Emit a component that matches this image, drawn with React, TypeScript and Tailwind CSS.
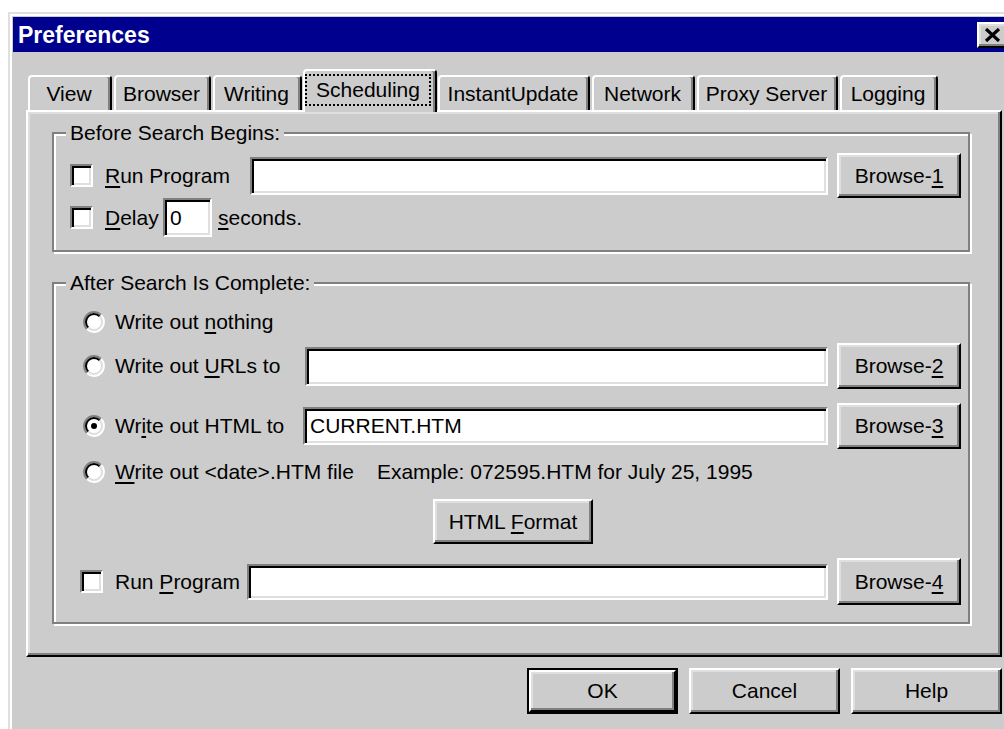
import React from 'react';

const raised =
  'border-2 border-t-white border-l-white border-r-black border-b-black bg-[#cccccc] shadow-[inset_-2px_-2px_0_#808080,inset_2px_2px_0_#dfdfdf]';
const sunken =
  'border-2 border-t-[#808080] border-l-[#808080] border-r-white border-b-white bg-white shadow-[inset_2px_2px_0_#000,inset_-2px_-2px_0_#dfdfdf]';

function Acc({ children }: { children: React.ReactNode }) {
  return <u className="underline decoration-2 underline-offset-[3px]">{children}</u>;
}

function Button({ children, className = '', isDefault = false }: { children: React.ReactNode; className?: string; isDefault?: boolean }) {
  const face = (
    <div className={`${raised} flex h-full w-full items-center justify-center`}>{children}</div>
  );
  return isDefault ? (
    <div className={`${className} border-2 border-black`}>{face}</div>
  ) : (
    <div className={`${className} ${raised} flex items-center justify-center`}>{children}</div>
  );
}

function Field({ value = '', className = '' }: { value?: string; className?: string }) {
  return <div className={`${sunken} ${className} flex items-center pl-[5px]`}>{value}</div>;
}

function Check() {
  return <div className={`${sunken} h-[23px] w-[23px] shrink-0`} />;
}

function Radio({ on = false }: { on?: boolean }) {
  return (
    <svg width="24" height="24" viewBox="0 0 24 24" className="shrink-0">
      <circle cx="12" cy="12" r="9" fill="#fff" />
      <path d="M19.07 4.93A10 10 0 0 0 4.93 19.07" stroke="#808080" strokeWidth="2" fill="none" />
      <path d="M4.93 19.07A10 10 0 0 0 19.07 4.93" stroke="#fff" strokeWidth="2" fill="none" />
      <path d="M17.66 6.34A8 8 0 0 0 6.34 17.66" stroke="#000" strokeWidth="2" fill="none" />
      <path d="M6.34 17.66A8 8 0 0 0 17.66 6.34" stroke="#dfdfdf" strokeWidth="2" fill="none" />
      {on && <circle cx="12" cy="12" r="3" fill="#000" />}
    </svg>
  );
}

const tabs = [
  { label: 'View', w: 'w-[84px]', ml: 'ml-0' },
  { label: 'Browser', w: 'w-[97px]', ml: 'ml-[2px]' },
  { label: 'Writing', w: 'w-[89px]', ml: 'ml-[2px]' },
  { label: 'Scheduling', w: 'w-[134px]', ml: 'ml-[1px]', active: true },
  { label: 'InstantUpdate', w: 'w-[152px]', ml: 'ml-[1px]' },
  { label: 'Network', w: 'w-[103px]', ml: 'ml-[2px]' },
  { label: 'Proxy Server', w: 'w-[141px]', ml: 'ml-[2px]' },
  { label: 'Logging', w: 'w-[98px]', ml: 'ml-[2px]' },
];

function Tabs() {
  return (
    <div className="flex h-[41px] items-end pl-[2px]">
      {tabs.map((t) =>
        t.active ? (
          <div
            key={t.label}
            className={`${t.w} ${t.ml} relative z-10 -mb-[2px] h-[43px] rounded-t-[4px] border-l-2 border-t-2 border-r-2 border-l-white border-t-white border-r-black bg-[#cccccc] pt-[3px] shadow-[inset_-2px_0_0_#808080]`}
          >
            <div className="flex h-[32px] w-[126px] items-center justify-center border-2 border-dotted border-black">
              {t.label}
            </div>
          </div>
        ) : (
          <div
            key={t.label}
            className={`${t.w} ${t.ml} flex h-[35px] items-center justify-center rounded-t-[4px] border-l-2 border-t-2 border-r-2 border-l-white border-t-white border-r-black pr-[2px] shadow-[inset_-2px_0_0_#808080]`}
          >
            {t.label}
          </div>
        ),
      )}
    </div>
  );
}

const group = 'w-[918px] border-2 border-[#808080] shadow-[inset_2px_2px_0_#fff,2px_2px_0_#fff]';
const legend = 'ml-[12px] bg-[#cccccc] px-[4px] leading-[24px]';

function BeforeGroup() {
  return (
    <fieldset className={`${group} pb-[13px]`}>
      <legend className={legend}>Before Search Begins:</legend>
      <div className="mt-[8px] flex h-[45px] items-center pl-[16px] pr-[7px]">
        <Check />
        <span className="ml-[12px] w-[145px] shrink-0">
          <Acc>R</Acc>un Program
        </span>
        <Field className="h-[38px] flex-1" />
        <Button className="ml-[9px] h-[45px] w-[124px] shrink-0">
          <span>
            Browse-<Acc>1</Acc>
          </span>
        </Button>
      </div>
      <div className="flex h-[39px] items-center pl-[16px]">
        <Check />
        <span className="ml-[12px] w-[58px] shrink-0">
          <Acc>D</Acc>elay
        </span>
        <Field value="0" className="h-[39px] w-[49px] pl-[3px]" />
        <span className="ml-[6px]">
          <Acc>s</Acc>econds.
        </span>
      </div>
    </fieldset>
  );
}

function AfterGroup() {
  return (
    <fieldset className={`${group} mt-[19px] pb-[17px]`}>
      <legend className={legend}>After Search Is Complete:</legend>
      <div className="mt-[7px] flex h-[40px] items-center pl-[28px]">
        <Radio />
        <span className="ml-[9px]">
          Write out <Acc>n</Acc>othing
        </span>
      </div>
      <div className="mt-[1px] flex h-[46px] items-center pl-[28px] pr-[7px]">
        <Radio />
        <span className="ml-[9px] w-[190px] shrink-0">
          Write out <Acc>U</Acc>RLs to
        </span>
        <Field className="h-[39px] flex-1" />
        <Button className="ml-[9px] h-[46px] w-[124px] shrink-0">
          <span>
            Browse-<Acc>2</Acc>
          </span>
        </Button>
      </div>
      <div className="mt-[14px] flex h-[46px] items-center pl-[28px] pr-[7px]">
        <Radio on />
        <span className="ml-[9px] w-[188px] shrink-0">
          Wr<Acc>i</Acc>te out HTML to
        </span>
        <Field value="CURRENT.HTM" className="h-[38px] flex-1" />
        <Button className="ml-[9px] h-[46px] w-[124px] shrink-0">
          <span>
            Browse-<Acc>3</Acc>
          </span>
        </Button>
      </div>
      <div className="mt-[9px] flex h-[28px] items-center pl-[28px]">
        <Radio />
        <span className="ml-[9px]">
          <Acc>W</Acc>rite out &lt;date&gt;.HTM file
        </span>
        <span className="ml-[23px]">Example: 072595.HTM for July 25, 1995</span>
      </div>
      <div className="mt-[13px] flex h-[45px] justify-center pl-[4px]">
        <Button className="h-[45px] w-[160px]">
          <span>
            HTML <Acc>F</Acc>ormat
          </span>
        </Button>
      </div>
      <div className="mt-[14px] flex h-[47px] items-center pl-[26px] pr-[7px]">
        <Check />
        <span className="ml-[12px] w-[132px] shrink-0">
          Run <Acc>P</Acc>rogram
        </span>
        <Field className="h-[36px] flex-1" />
        <Button className="ml-[9px] h-[47px] w-[124px] shrink-0">
          <span>
            Browse-<Acc>4</Acc>
          </span>
        </Button>
      </div>
    </fieldset>
  );
}

export default function App() {
  return (
    <div className="h-[729px] w-[1004px] overflow-hidden bg-white pl-[8px] pt-[12px] font-['Liberation_Sans',Arial,sans-serif] text-[21px] leading-[24px] text-black">
      <div className="h-[740px] w-[1010px] border-l-2 border-t-2 border-[#dfdfdf] bg-[#cccccc] pl-[3px] pt-[3px] shadow-[inset_2px_2px_0_#fff]">
        {/* title bar */}
        <div className="flex h-[35px] w-[998px] items-center justify-between bg-[#00008f] pl-[5px] pr-[2px]">
          <span className="text-[23px] font-bold text-white">Preferences</span>
          <div className={`${raised} flex h-[26px] w-[32px] items-center justify-start pl-[5px]`}>
            <svg width="17" height="14" viewBox="0 0 17 14">
              <path d="M2 1l13 12M15 1L2 13" stroke="#000" strokeWidth="3.2" />
            </svg>
          </div>
        </div>

        <div className="pl-[13px] pt-[17px]">
          <Tabs />
          <div className="h-[547px] w-[976px] border-2 border-t-white border-l-white border-r-black border-b-black pl-[24px] pt-[9px] shadow-[inset_-2px_-2px_0_#808080,inset_2px_2px_0_#dfdfdf]">
            <BeforeGroup />
            <AfterGroup />
          </div>
          <div className="mt-[11px] flex w-[976px] justify-end gap-[11px]">
            <Button isDefault className="h-[46px] w-[151px]">
              OK
            </Button>
            <Button className="h-[46px] w-[151px]">Cancel</Button>
            <Button className="h-[46px] w-[151px]">Help</Button>
          </div>
        </div>
      </div>
    </div>
  );
}
